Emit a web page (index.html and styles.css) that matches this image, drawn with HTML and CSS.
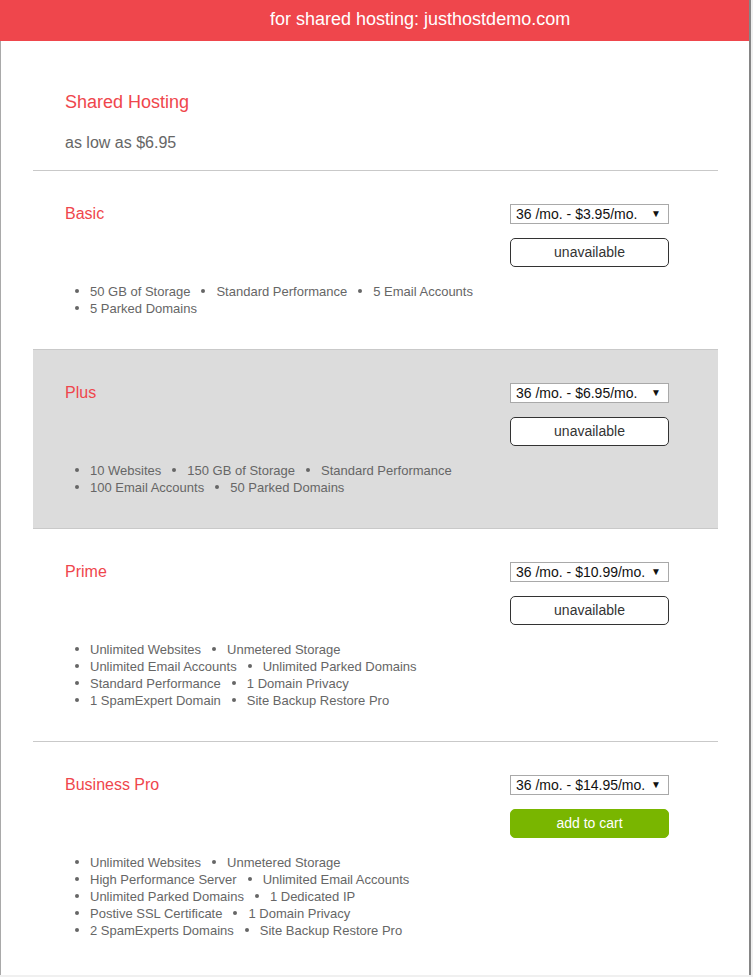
FILE: index.html
```html
<!DOCTYPE html>
<html lang="en">
<head>
<meta charset="utf-8">
<title>Shared Hosting</title>
<link rel="stylesheet" href="styles.css">
</head>
<body>
<div class="page">
  <header class="topbar">for shared hosting: justhostdemo.com</header>
  <main class="content">
    <section class="intro">
      <h1 class="intro-title">Shared Hosting</h1>
      <p class="intro-price">as low as $6.95</p>
    </section>

    <section class="plan">
      <div class="plan-top">
        <h2 class="plan-name">Basic</h2>
        <div class="plan-actions">
          <div class="select-wrap">
            <select class="term"><option>36 /mo. - $3.95/mo.</option></select>
          </div>
          <button class="btn btn-off" type="button">unavailable</button>
        </div>
      </div>
      <ul class="features">
        <li>50 GB of Storage</li>
        <li>Standard Performance</li>
        <li>5 Email Accounts</li>
        <li>5 Parked Domains</li>
      </ul>
    </section>

    <section class="plan plan-alt">
      <div class="plan-top">
        <h2 class="plan-name">Plus</h2>
        <div class="plan-actions">
          <div class="select-wrap">
            <select class="term"><option>36 /mo. - $6.95/mo.</option></select>
          </div>
          <button class="btn btn-off" type="button">unavailable</button>
        </div>
      </div>
      <ul class="features">
        <li>10 Websites</li>
        <li>150 GB of Storage</li>
        <li>Standard Performance</li>
        <li>100 Email Accounts</li>
        <li>50 Parked Domains</li>
      </ul>
    </section>

    <section class="plan">
      <div class="plan-top">
        <h2 class="plan-name">Prime</h2>
        <div class="plan-actions">
          <div class="select-wrap">
            <select class="term"><option>36 /mo. - $10.99/mo.</option></select>
          </div>
          <button class="btn btn-off" type="button">unavailable</button>
        </div>
      </div>
      <ul class="features">
        <li>Unlimited Websites</li>
        <li>Unmetered Storage</li>
        <li>Unlimited Email Accounts</li>
        <li>Unlimited Parked Domains</li>
        <li>Standard Performance</li>
        <li>1 Domain Privacy</li>
        <li>1 SpamExpert Domain</li>
        <li>Site Backup Restore Pro</li>
      </ul>
    </section>

    <section class="plan plan-last">
      <div class="plan-top">
        <h2 class="plan-name">Business Pro</h2>
        <div class="plan-actions">
          <div class="select-wrap">
            <select class="term"><option>36 /mo. - $14.95/mo.</option></select>
          </div>
          <button class="btn btn-cart" type="button">add to cart</button>
        </div>
      </div>
      <ul class="features">
        <li>Unlimited Websites</li>
        <li>Unmetered Storage</li>
        <li>High Performance Server</li>
        <li>Unlimited Email Accounts</li>
        <li>Unlimited Parked Domains</li>
        <li>1 Dedicated IP</li>
        <li>Postive SSL Certificate</li>
        <li>1 Domain Privacy</li>
        <li>2 SpamExperts Domains</li>
        <li>Site Backup Restore Pro</li>
      </ul>
    </section>
  </main>
</div>
</body>
</html>
```

FILE: styles.css
```css
* { box-sizing: border-box; }

html, body {
  margin: 0;
  padding: 0;
}

body {
  background: #f0f0f0;
  font-family: "Liberation Sans", Arial, sans-serif;
  color: #666;
}

.page {
  width: 751px;
  background: #fff;
  border-right: 2px solid #858585;
}

.topbar {
  height: 41px;
  padding: 8px 0 0 270px;
  background: #ef464c;
  color: #fff;
  font-size: 18px;
  line-height: 22px;
  white-space: nowrap;
}

.content {
  border-left: 1px solid #a9a9a9;
}

.intro {
  padding: 50px 0 17px 64px;
}

.intro-title {
  margin: 0;
  font-size: 18px;
  line-height: 22px;
  font-weight: normal;
  color: #ef464c;
}

.intro-price {
  margin: 20px 0 0;
  font-size: 16px;
  line-height: 20px;
  color: #666;
}

.plan {
  margin: 0 31px 0 32px;
  border-top: 1px solid #c9c9c9;
  padding: 33px 49px 32px 32px;
}

.plan-alt {
  background: #dcdcdc;
}

.plan-last {
  padding-bottom: 36px;
}

.plan-top {
  display: flex;
  justify-content: space-between;
  align-items: flex-start;
}

.plan-name {
  margin: 0;
  padding-top: 1px;
  font-size: 16px;
  line-height: 18px;
  font-weight: normal;
  color: #ef464c;
}

.plan-actions {
  width: 159px;
  display: flex;
  flex-direction: column;
  gap: 14px;
}

.select-wrap {
  position: relative;
  height: 20px;
}

.select-wrap::after {
  content: "\25BC";
  position: absolute;
  right: 8px;
  top: 5px;
  font-size: 10px;
  line-height: 10px;
  color: #111;
  pointer-events: none;
}

.term {
  -webkit-appearance: none;
  appearance: none;
  display: block;
  width: 159px;
  height: 20px;
  margin: 0;
  padding: 0 0 0 5px;
  border: 1px solid #a9a9a9;
  border-radius: 0;
  background: #fff;
  color: #111;
  font-family: "Liberation Sans", Arial, sans-serif;
  font-size: 14px;
  line-height: 18px;
}

.btn {
  display: block;
  width: 159px;
  height: 29px;
  margin: 0;
  padding: 0;
  border-radius: 5px;
  font-family: "Liberation Sans", Arial, sans-serif;
  font-size: 14px;
  line-height: 27px;
  text-align: center;
}

.btn-off {
  border: 1px solid #333;
  background: #fff;
  color: #333;
}

.btn-cart {
  border: 1px solid #79b600;
  background: #79b600;
  color: #fff;
}

.features {
  margin: 16px 0 0;
  padding: 0 0 0 10px;
  width: 418px;
  list-style: none;
  display: flex;
  flex-wrap: wrap;
  column-gap: 11px;
}

.features li {
  font-size: 13px;
  line-height: 17px;
  color: #666;
  white-space: nowrap;
}

.features li::before {
  content: "";
  display: inline-block;
  width: 4px;
  height: 4px;
  margin-right: 11px;
  border-radius: 50%;
  background: #666;
  vertical-align: 3px;
}
```
